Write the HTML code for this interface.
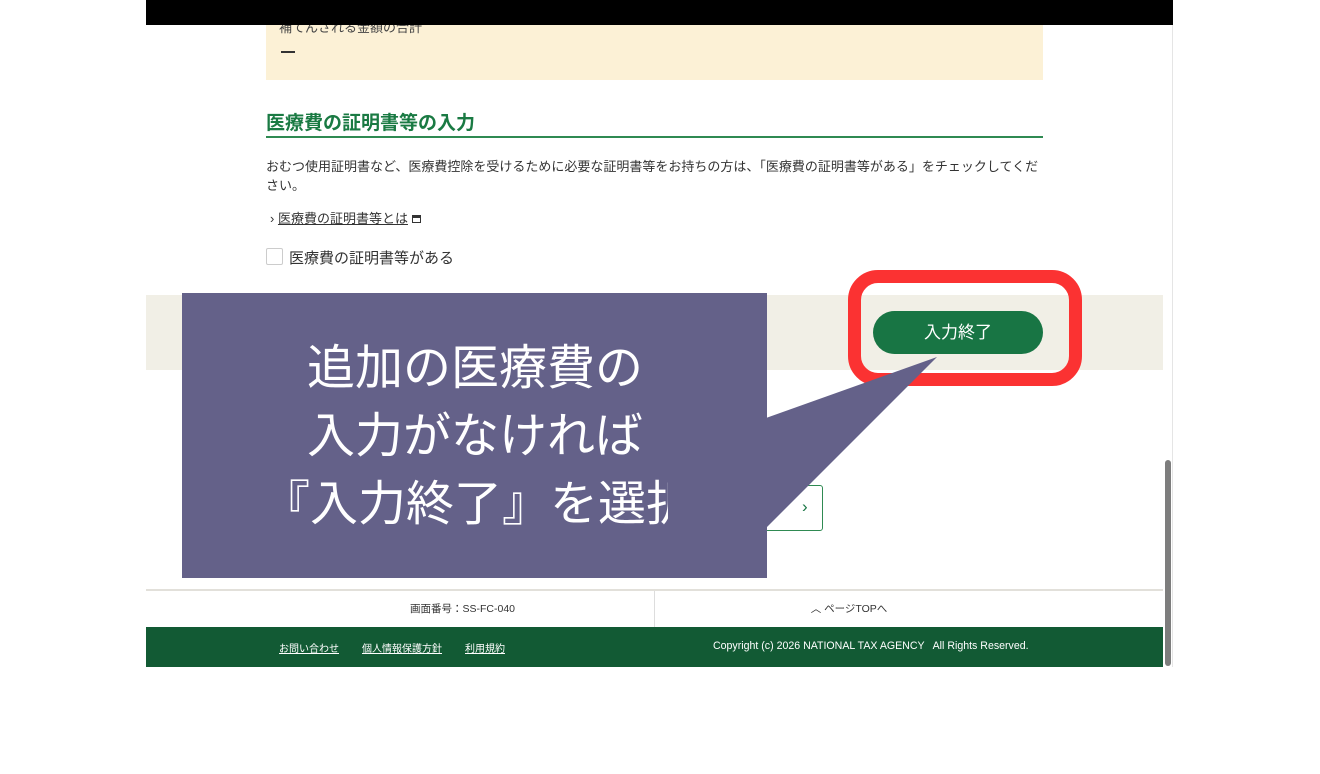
<!DOCTYPE html>
<html><head><meta charset="utf-8"><style>
*{margin:0;padding:0;box-sizing:border-box}
body{width:1320px;height:774px;background:#fff;position:relative;overflow:hidden;font-family:"Liberation Sans","Noto Sans CJK JP",sans-serif;color:#333}
.a{position:absolute}
</style></head><body>
<div class="a" style="left:146px;top:0;width:1027px;height:667px;background:#fff;border-right:1px solid #e5e5e5"></div>
<div class="a" style="left:266px;top:20px;width:777px;height:60px;background:#fcf1d6"></div>
<div class="a" style="left:279px;top:17px;font-size:13px;color:#444">補てんされる金額の合計</div>
<div class="a" style="left:281px;top:51px;width:14px;height:2px;background:#333"></div>
<div class="a" style="left:146px;top:0;width:1027px;height:25px;background:#000"></div>
<div class="a" style="left:266px;top:108px;font-size:19px;font-weight:bold;color:#1a7a43">医療費の証明書等の入力</div>
<div class="a" style="left:266px;top:136px;width:777px;height:2px;background:#2f8a52"></div>
<div class="a" style="left:266px;top:157px;white-space:nowrap;font-size:13px;line-height:19px;color:#333">おむつ使用証明書など、医療費控除を受けるために必要な証明書等をお持ちの方は、「医療費の証明書等がある」をチェックしてくだ<br>さい。</div>
<div class="a" style="left:270px;top:208px;font-size:13px;color:#333">›&nbsp;<span style="text-decoration:underline">医療費の証明書等とは</span> <span style="display:inline-block;width:9px;height:8px;border:1.5px solid #333;border-top-width:3px"></span></div>
<div class="a" style="left:266px;top:248px;width:17px;height:17px;border:1px solid #ccc;border-radius:2px;background:#fff"></div>
<div class="a" style="left:289px;top:247px;font-size:15px;color:#333">医療費の証明書等がある</div>
<div class="a" style="left:146px;top:295px;width:1017px;height:75px;background:#f1efe6"></div>
<div class="a" style="left:873px;top:311px;width:170px;height:43px;border-radius:22px;background:#187544;color:#fff;font-size:17px;text-align:center;line-height:43px">入力終了</div>
<div class="a" style="left:848px;top:270px;width:234px;height:116px;border:13px solid #fb3232;border-radius:30px"></div>
<div class="a" style="left:780px;top:452px;font-size:13px;color:#333">ます。</div>
<div class="a" style="left:640px;top:485px;width:183px;height:46px;border:1.5px solid #2f8a52;border-radius:3px;background:#fff"></div>
<div class="a" style="left:802px;top:497px;font-size:17px;color:#187544">›</div>
<svg class="a" style="left:0;top:0" width="1320" height="774"><polygon points="766,418 937,357 766,528" fill="#646189"/></svg>
<div class="a" style="left:182px;top:293px;width:585px;height:285px;background:#646189"></div>
<div class="a" style="left:182px;top:335px;width:486px;height:200px;overflow:hidden;color:#fff;font-size:48px;line-height:68px;white-space:nowrap">
<div style="padding-left:125px">追加の医療費の</div>
<div style="padding-left:125px">入力がなければ</div>
<div style="padding-left:80px">『入力終了』を選択</div>
</div>
<div class="a" style="left:146px;top:589px;width:1017px;height:2px;background:#e2e0da"></div>
<div class="a" style="left:654px;top:591px;width:1px;height:36px;background:#ddd"></div>
<div class="a" style="left:410px;top:601px;font-size:10.5px;color:#333">画面番号：SS-FC-040</div>
<div class="a" style="left:654px;top:601px;width:390px;text-align:center;font-size:10.5px;color:#333">︿ ページTOPへ</div>
<div class="a" style="left:146px;top:627px;width:1017px;height:40px;background:#125a34"></div>
<div class="a" style="left:279px;top:640px;font-size:10px;color:#fff;text-decoration:underline">お問い合わせ</div>
<div class="a" style="left:362px;top:640px;font-size:10px;color:#fff;text-decoration:underline">個人情報保護方針</div>
<div class="a" style="left:465px;top:640px;font-size:10px;color:#fff;text-decoration:underline">利用規約</div>
<div class="a" style="left:713px;top:640px;font-size:10.6px;color:#fff;white-space:pre">Copyright (c) 2026 NATIONAL TAX AGENCY   All Rights Reserved.</div>
<div class="a" style="left:1165px;top:460px;width:6px;height:206px;border-radius:3px;background:#7d7d7d"></div>
</body></html>
